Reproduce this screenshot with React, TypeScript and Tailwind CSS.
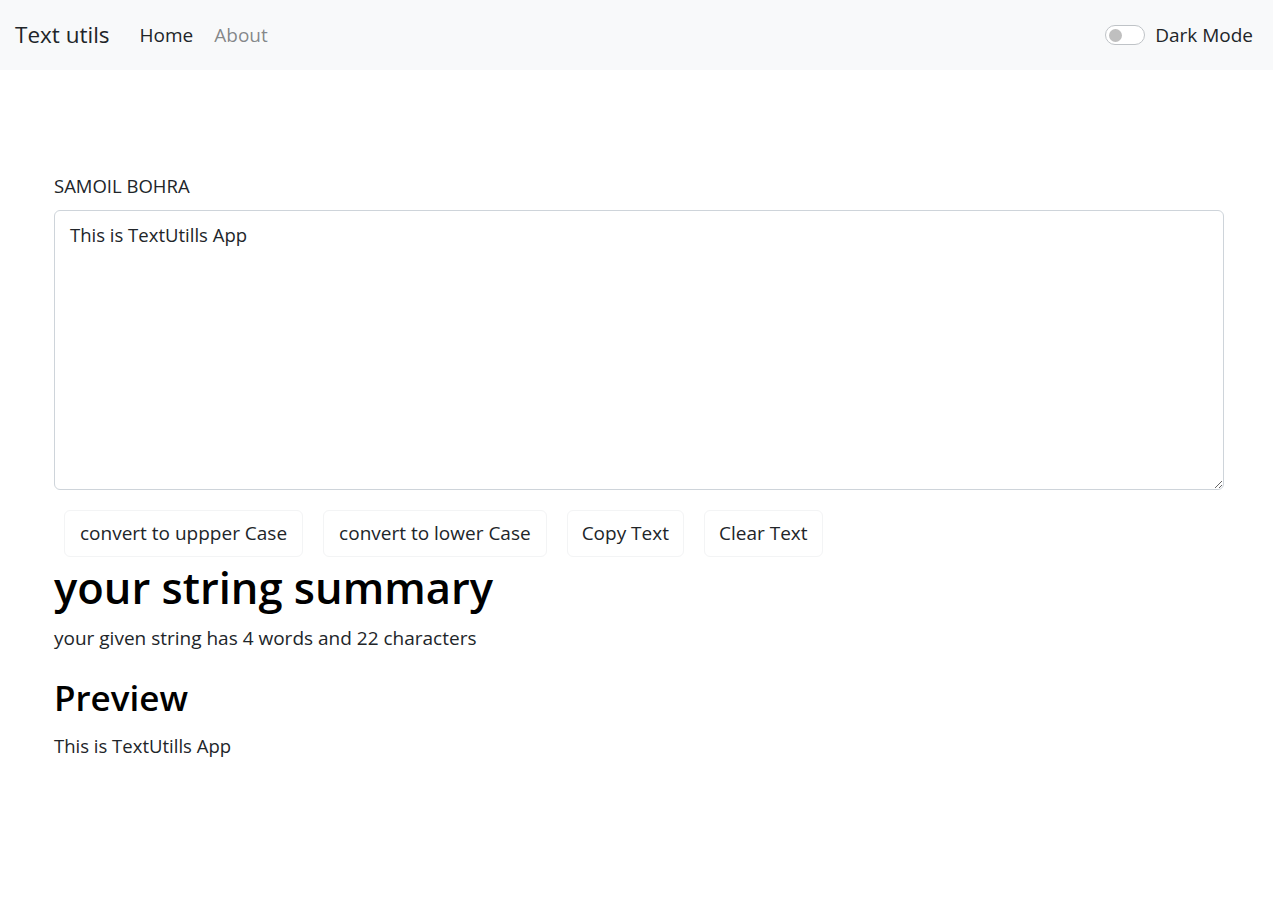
import React, { useState } from 'react';

const font = { fontFamily: '"Open Sans", "Noto Sans", sans-serif' };

const App: React.FC = () => {
  const [text, setText] = useState('This is TextUtills App');
  const [dark, setDark] = useState(false);

  const words = text.split(/\s+/).filter((w) => w.length > 0).length;

  return (
    <div className="min-h-[900px] bg-white text-[#212529]" style={font}>
      {/* Navbar */}
      <nav className="h-[70px] bg-[#f8f9fa] flex items-center justify-between pl-[15px] pr-[20px]">
        <div className="flex items-center">
          <a className="text-[22.5px] text-[#212529] mr-[30px]">Text utils</a>
          <a className="text-[19px] text-[#212529] mr-[21px]">Home</a>
          <a className="text-[19px] text-[#212529]/55">About</a>
        </div>
        <label className="flex items-center">
          <button
            onClick={() => setDark(!dark)}
            className="w-[40px] h-[20px] rounded-full border border-[#bfc3c7] bg-white flex items-center px-[3px] mr-[10px]"
          >
            <span className="block w-[13px] h-[13px] rounded-full bg-[#bfbfbf]" />
          </button>
          <span className="text-[19px] text-[#212529]">Dark Mode</span>
        </label>
      </nav>

      {/* Main */}
      <div className="pl-[54px] pr-[49px] pt-[102px]">
        <p className="text-[18.5px] leading-[28px] mb-[10px]">SAMOIL BOHRA</p>
        <textarea
          value={text}
          onChange={(e) => setText(e.target.value)}
          className="block w-full h-[280px] rounded-[6px] border border-[#ced4da] px-[15px] pt-[10px] pb-[10px] text-[18.5px] leading-[28px] text-[#212529] outline-none"
        />
        <div className="flex gap-[20px] mt-[20px] pl-[10px]">
          <button className="h-[47px] px-[15px] rounded-[6px] border border-[#f3f4f5] text-[19px]">
            convert to uppper Case
          </button>
          <button className="h-[47px] px-[15px] rounded-[6px] border border-[#f3f4f5] text-[19px]">
            convert to lower Case
          </button>
          <button className="h-[47px] px-[14px] rounded-[6px] border border-[#f3f4f5] text-[19px]">
            Copy Text
          </button>
          <button className="h-[47px] px-[14px] rounded-[6px] border border-[#f3f4f5] text-[19px]">
            Clear Text
          </button>
        </div>

        <h1 className="text-[43.5px] leading-[52px] font-semibold text-black mt-[5px]">your string summary</h1>
        <p className="text-[19px] leading-[28px] mt-[10px]">
          your given string has {words} words and {text.length} characters
        </p>
        <h2 className="text-[35px] leading-[42px] font-semibold text-black mt-[25px]">Preview</h2>
        <p className="text-[18.5px] leading-[28px] mt-[13px]">{text}</p>
      </div>
    </div>
  );
};

export default App;
